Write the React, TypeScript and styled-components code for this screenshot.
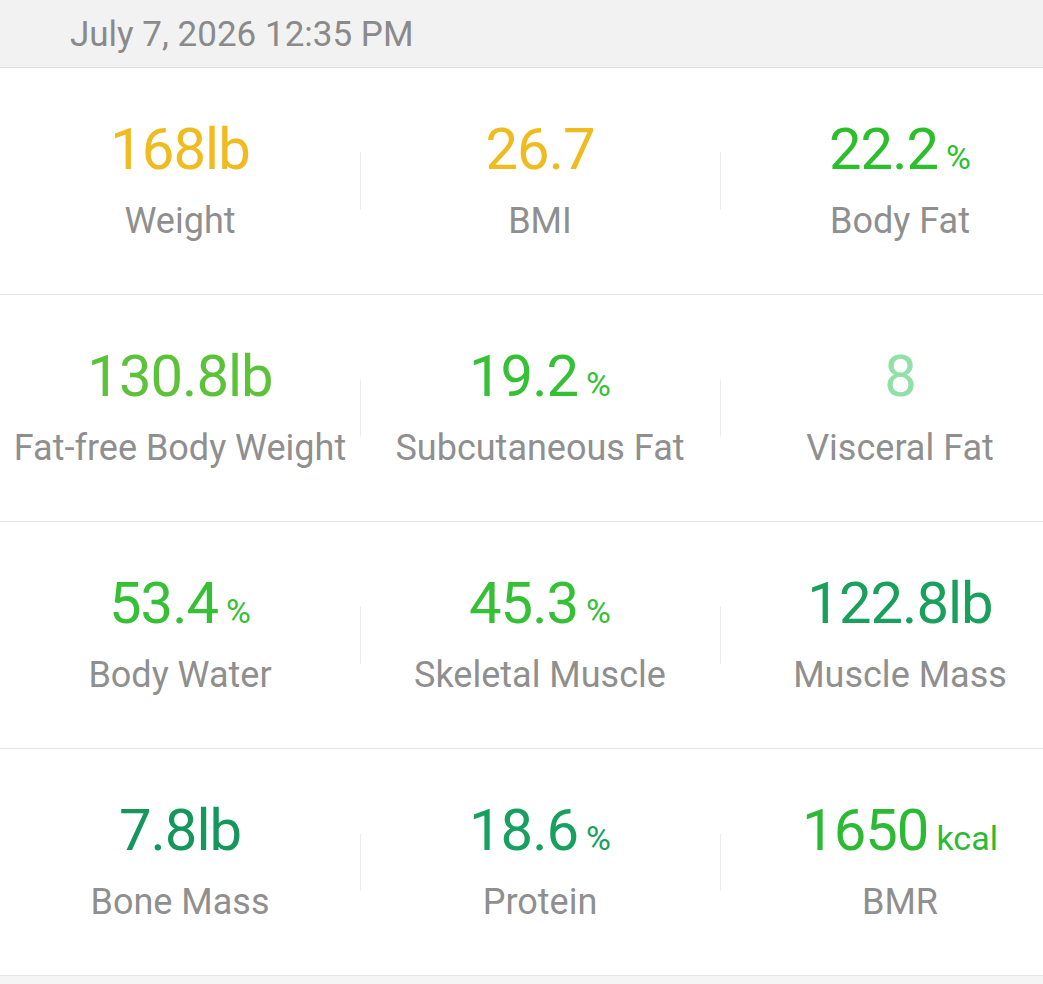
import React from 'react';
import styled, { createGlobalStyle } from 'styled-components';

interface Metric {
    value: string;
    unit?: string;
    label: string;
    color: string;
}

const rows: Metric[][] = [
    [
        { value: '168lb', label: 'Weight', color: '#f0bb1e' },
        { value: '26.7', label: 'BMI', color: '#f0bb1e' },
        { value: '22.2', unit: '%', label: 'Body Fat', color: '#2cbf2c' },
    ],
    [
        { value: '130.8lb', label: 'Fat-free Body Weight', color: '#5cc23a' },
        { value: '19.2', unit: '%', label: 'Subcutaneous Fat', color: '#36c036' },
        { value: '8', label: 'Visceral Fat', color: '#90e0a8' },
    ],
    [
        { value: '53.4', unit: '%', label: 'Body Water', color: '#36c036' },
        { value: '45.3', unit: '%', label: 'Skeletal Muscle', color: '#36c036' },
        { value: '122.8lb', label: 'Muscle Mass', color: '#18a05c' },
    ],
    [
        { value: '7.8lb', label: 'Bone Mass', color: '#14975c' },
        { value: '18.6', unit: '%', label: 'Protein', color: '#18a060' },
        { value: '1650', unit: 'kcal', label: 'BMR', color: '#2cba34' },
    ],
];

const App: React.FC = () => {
    return (
        <>
            <GlobalStyle />
            <Page>
                <DateBar>July 7, 2026 12:35 PM</DateBar>
                {rows.map((row, i) => (
                    <Row key={i}>
                        {row.map((m, j) => (
                            <Cell key={j} divided={j > 0}>
                                <Value color={m.color}>
                                    {m.value}
                                    {m.unit && <Unit>{m.unit}</Unit>}
                                </Value>
                                <Label>{m.label}</Label>
                            </Cell>
                        ))}
                    </Row>
                ))}
            </Page>
        </>
    );
};

const GlobalStyle = createGlobalStyle`
    html, body {
        margin: 0;
        padding: 0;
        background: #f5f5f5;
        overflow: hidden;
    }
`;

const Page = styled.div`
    width: 1080px;
    font-family: Roboto, 'Liberation Sans', sans-serif;
`;

const DateBar = styled.div`
    height: 68px;
    box-sizing: border-box;
    padding-left: 70px;
    padding-top: 1px;
    display: flex;
    align-items: center;
    background: #f2f2f2;
    border-bottom: 1px solid #dedede;
    color: #8a8a8a;
    font-size: 35px;
`;

const Row = styled.div`
    display: flex;
    height: 227px;
    box-sizing: border-box;
    background: #fff;
    border-bottom: 1px solid #e6e6e6;
`;

const Cell = styled.div<{ divided: boolean }>`
    position: relative;
    flex: 0 0 360px;
    display: flex;
    flex-direction: column;
    align-items: center;
    justify-content: center;
    padding-bottom: 2px;

    &::before {
        content: '';
        display: ${props => (props.divided ? 'block' : 'none')};
        position: absolute;
        left: 0;
        top: 50%;
        width: 1px;
        height: 57px;
        transform: translateY(-50%);
        background: #ececec;
    }
`;

const Value = styled.div<{ color: string }>`
    height: 64px;
    font-size: 58px;
    line-height: 64px;
    letter-spacing: -1px;
    color: ${props => props.color};
    white-space: nowrap;
`;

const Unit = styled.span`
    font-size: 34px;
    line-height: 0;
    letter-spacing: 0;
    margin-left: 8px;
`;

const Label = styled.div`
    margin-top: 18px;
    font-size: 36px;
    line-height: 44px;
    color: #8f8f8f;
    white-space: nowrap;
`;

export default App;
